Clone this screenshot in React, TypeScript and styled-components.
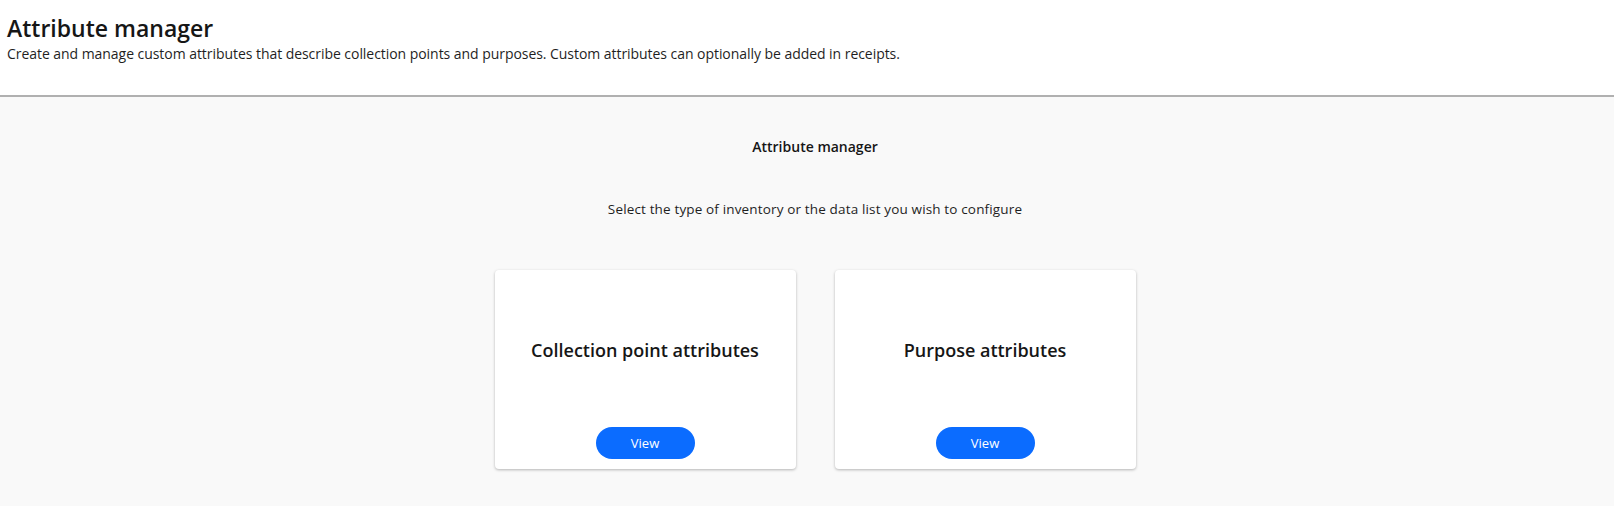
import React from "react";
import styled, { createGlobalStyle } from "styled-components";

const GlobalStyle = createGlobalStyle`
  html, body { margin: 0; padding: 0; background: #ffffff; }
  body { font-family: "Open Sans", "Noto Sans", sans-serif; color: #1a1a1a; }
  * { box-sizing: border-box; }
`;

const Page = styled.div`
  display: flex;
  flex-direction: column;
  min-height: 506px;
`;

const Header = styled.header`
  background: #ffffff;
  padding: 13px 8px 0 7px;
  height: 97px;
  border-bottom: 2px solid #b0b0b0;
`;

const Title = styled.h1`
  margin: 0;
  font-size: 23px;
  line-height: 30px;
  font-weight: 600;
  color: #161616;
`;

const Subtitle = styled.p`
  margin: 2px 0 0 0;
  font-size: 14px;
  line-height: 18px;
  letter-spacing: -0.05px;
  color: #1f1f1f;
`;

const Body = styled.main`
  flex: 1;
  background: #f9f9f9;
  padding: 41px 0 0 16px;
  display: flex;
  flex-direction: column;
  align-items: center;
`;

const SectionTitle = styled.h2`
  margin: 0;
  font-size: 14px;
  line-height: 18px;
  font-weight: 600;
  color: #161616;
`;

const SectionText = styled.p`
  margin: 44px 0 0 0;
  font-size: 13.5px;
  line-height: 18px;
  letter-spacing: 0.15px;
  color: #1f1f1f;
`;

const CardRow = styled.div`
  display: flex;
  gap: 39px;
  margin-top: 52px;
`;

const Card = styled.div`
  width: 301px;
  height: 199px;
  background: #ffffff;
  border-radius: 4px;
  box-shadow: 0 1px 3px rgba(0, 0, 0, 0.28);
  display: flex;
  flex-direction: column;
  align-items: center;
  padding-bottom: 10px;
`;

const CardTitle = styled.div`
  flex: 1;
  display: flex;
  align-items: center;
  justify-content: center;
  font-size: 18px;
  font-weight: 600;
  color: #161616;
  padding-top: 2px;
`;

const ViewButton = styled.button`
  width: 99px;
  height: 32px;
  border: none;
  border-radius: 16px;
  background: #0b6cff;
  color: #ffffff;
  font-family: inherit;
  font-size: 13px;
  cursor: pointer;
`;

const cards = ["Collection point attributes", "Purpose attributes"];

export default function App() {
  return (
    <>
      <GlobalStyle />
      <Page>
        <Header>
          <Title>Attribute manager</Title>
          <Subtitle>
            Create and manage custom attributes that describe collection points and purposes. Custom attributes can
            optionally be added in receipts.
          </Subtitle>
        </Header>
        <Body>
          <SectionTitle>Attribute manager</SectionTitle>
          <SectionText>Select the type of inventory or the data list you wish to configure</SectionText>
          <CardRow>
            {cards.map((c) => (
              <Card key={c}>
                <CardTitle>{c}</CardTitle>
                <ViewButton>View</ViewButton>
              </Card>
            ))}
          </CardRow>
        </Body>
      </Page>
    </>
  );
}
